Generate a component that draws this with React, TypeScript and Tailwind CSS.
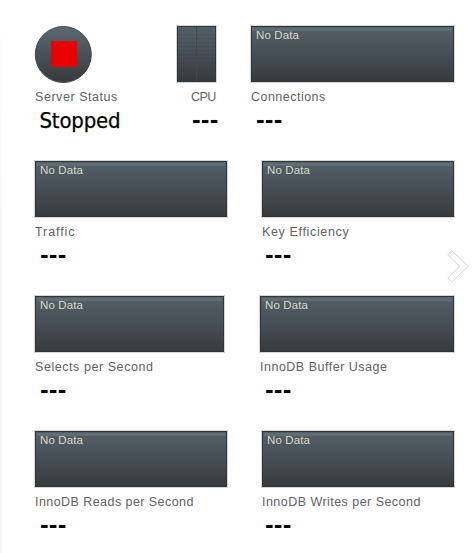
type MetricProps = {
  label: string;
  width: string;
  tracking: string;
  valueInset?: string;
};

const labelStyle = "block h-4 whitespace-nowrap font-['Liberation_Sans',sans-serif] text-[12.5px] leading-4 text-[#626262]";
const panelStyle = "h-14 border border-[#323639] bg-linear-to-b from-[#536067] via-[#474e56] to-[#383b3d] outline-1 outline-[#d5d7d7]";

function Dashes({ inset = "pl-[5px]" }: { inset?: string }) {
  return (
    <div className={`mt-1 h-6 whitespace-nowrap font-['DejaVu_Sans',sans-serif] text-[21px] leading-[25px] font-bold tracking-[0.1px] text-black ${inset}`}>
      ---
    </div>
  );
}

function Metric({ label, width, tracking, valueInset }: MetricProps) {
  return (
    <section className={`h-[135px] shrink-0 ${width}`}>
      <div className={panelStyle}>
        <div className="mx-px mt-px h-[3px] bg-[#616d75]" />
        <div className="-mt-[3px] pl-1 font-['Liberation_Sans',sans-serif] text-[11.5px] leading-[15px] tracking-[0.12px] text-[#d8d8c8]">No Data</div>
      </div>
      <div className={`mt-[7px] ${labelStyle} ${tracking}`}>{label}</div>
      <Dashes inset={valueInset} />
    </section>
  );
}

export default function App() {
  return (
    <main className="flex h-[553px] w-[474px] overflow-hidden bg-white">
      <div className="w-0.5 shrink-0 bg-linear-to-b from-white via-[#f6f6f6] to-[#f6f6f6]" />
      <div className="ml-[33px] flex w-[419px] shrink-0 flex-col pt-[26px]">
        <div className="flex justify-between">
          <section className="h-[135px] w-[90px]">
            <svg width="58" height="58" viewBox="0 0 58 58" className="-mb-0.5 -ml-px block">
              <defs>
                <linearGradient id="status-face" x2="0" y2="1">
                  <stop stopColor="#5c6870" />
                  <stop offset=".5" stopColor="#485057" />
                  <stop offset="1" stopColor="#373a3c" />
                </linearGradient>
              </defs>
              <circle cx="29.3" cy="28.5" r="28" fill="url(#status-face)" stroke="#43484b" />
              <rect x="17" y="15" width="26" height="26" fill="#e90000" />
            </svg>
            <div className={`mt-[7px] ${labelStyle} tracking-[0.55px]`}>Server Status</div>
            <div className="mt-px h-[30px] pl-[4.5px] font-['DejaVu_Sans_Condensed','DejaVu_Sans',sans-serif] text-[22px] leading-[30px] tracking-[-0.2px] text-black [-webkit-text-stroke:0.25px_black]">Stopped</div>
          </section>
          <div className="flex gap-[35px]">
            <section className="w-[39px]">
              <div className={`${panelStyle} flex`}>
                <div className="h-full w-[19px] border-r border-[#41494e] bg-[repeating-linear-gradient(to_bottom,transparent_0px,transparent_3px,#353c4130_3px,#353c4130_4px)]" />
                <div className="h-full flex-1 bg-[repeating-linear-gradient(to_bottom,transparent_0px,transparent_3px,#353c4130_3px,#353c4130_4px)]" />
              </div>
              <div className={`mt-[7px] pl-3.5 tracking-[-0.5px] ${labelStyle}`}>CPU</div>
              <Dashes inset="pl-[15px]" />
            </section>
            <Metric label="Connections" width="w-[203px]" tracking="tracking-[0.48px]" />
          </div>
        </div>
        <div className="flex justify-between">
          <Metric label="Traffic" width="w-[192px]" tracking="tracking-[0.9px]" />
          <Metric label="Key Efficiency" width="w-[192px]" tracking="tracking-[0.65px]" valueInset="pl-[3px]" />
        </div>
        <div className="flex justify-between">
          <Metric label="Selects per Second" width="w-[189px]" tracking="tracking-[0.56px]" />
          <Metric label="InnoDB Buffer Usage" width="w-[194px]" tracking="tracking-[0.5px]" />
        </div>
        <div className="flex justify-between">
          <Metric label="InnoDB Reads per Second" width="w-[192px]" tracking="tracking-[0.44px]" />
          <Metric label="InnoDB Writes per Second" width="w-[192px]" tracking="tracking-[0.46px]" valueInset="pl-[3px]" />
        </div>
      </div>
      <svg width="23" height="35" viewBox="0 0 23 35" className="-ml-[7px] mt-[249px] shrink-0" fill="none">
        <path d="M0.8 5.5 4.7 1.7 21.2 17.2 4.7 33 0.8 29 12.5 17.3Z" stroke="#d4d4d4" strokeWidth="1" />
      </svg>
    </main>
  );
}
